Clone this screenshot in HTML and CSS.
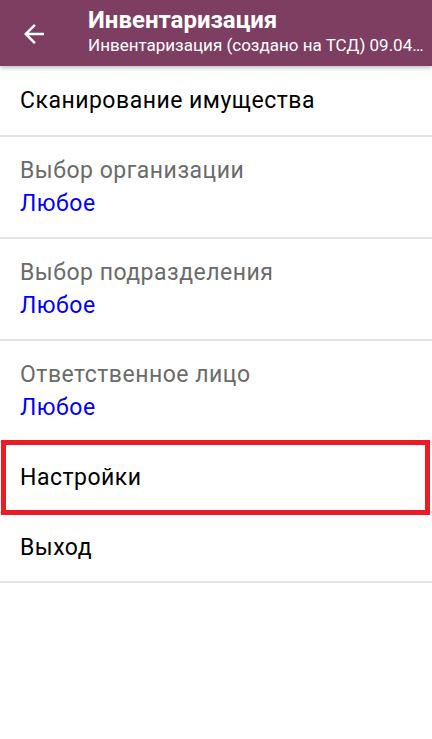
FILE: index.html
```html
<!DOCTYPE html>
<html lang="ru">
<head>
<meta charset="UTF-8" />
<meta name="viewport" content="width=device-width, initial-scale=1" />
<title>Инвентаризация</title>
<link rel="stylesheet" href="styles.css">
</head>
<body>

<header class="toolbar">
  <div class="back">
    <svg width="20" height="20" viewBox="0 0 16 16">
      <path d="M16 7H3.83l5.59-5.59L8 0 0 8l8 8 1.41-1.41L3.83 9H16z" fill="#fff"/>
    </svg>
  </div>
  <div class="titles">
    <div class="title">Инвентаризация</div>
    <div class="subtitle">Инвентаризация (создано на ТСД) 09.04…</div>
  </div>
</header>

<ul class="menu">
  <li class="row single first">Сканирование имущества</li>
  <li class="row double">
    <div class="label">Выбор организации</div>
    <div class="value">Любое</div>
  </li>
  <li class="row double">
    <div class="label">Выбор подразделения</div>
    <div class="value">Любое</div>
  </li>
  <li class="row double">
    <div class="label">Ответственное лицо</div>
    <div class="value">Любое</div>
  </li>
  <li class="row single marked">
    Настройки
    <span class="highlight"></span>
  </li>
  <li class="row single">Выход</li>
</ul>

</body>
</html>
```

FILE: styles.css
```css
body {
  margin: 0;
  padding: 0;
  background: #fff;
  font-family: Roboto, "Noto Sans", sans-serif;
  color: #000;
}
.toolbar {
  height: 66px;
  background-color: #7d3e62;
  color: #fff;
  display: flex;
  align-items: center;
  box-shadow: 0 2px 4px rgba(0, 0, 0, 0.25);
  position: relative;
  z-index: 2;
}
.toolbar .back {
  width: 88px;
  flex: none;
  display: flex;
  justify-content: flex-start;
  padding-left: 24px;
  box-sizing: border-box;
  margin-top: 1px;
}
.toolbar .titles {
  min-width: 0;
  flex: 1;
}
.toolbar .title {
  font-size: 24px;
  font-weight: 700;
  line-height: 28px;
  margin-top: -4px;
}
.toolbar .subtitle {
  font-size: 17px;
  line-height: 22px;
  white-space: nowrap;
  overflow: hidden;
}
.menu {
  list-style: none;
  margin: 0;
  padding: 0;
}
.row {
  border-bottom: 2px solid #e2e2e2;
  padding: 0 20px;
  font-size: 23px;
  letter-spacing: 0.5px;
  box-sizing: border-box;
}
.row.single {
  height: 70px;
  display: flex;
  align-items: center;
}
.row.first {
  height: 71px;
}
.row.double {
  height: 102px;
  padding-top: 20px;
}
.label {
  color: #6b6b6b;
  line-height: 28px;
}
.value {
  color: #0000ff;
  line-height: 28px;
  margin-top: 5px;
}
.marked {
  position: relative;
}
.highlight {
  position: absolute;
  top: -3px;
  bottom: -4px;
  left: 1px;
  right: 2px;
  border: 5px solid #ec1c27;
}
```
